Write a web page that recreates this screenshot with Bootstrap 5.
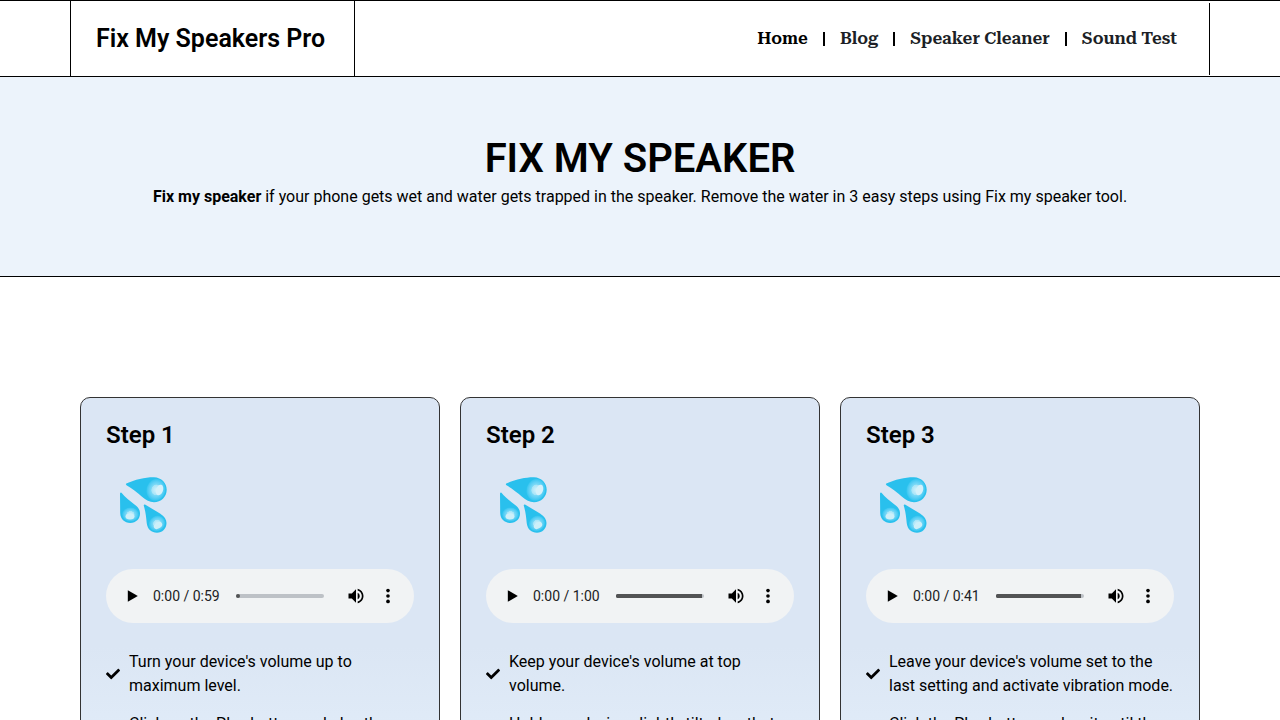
<!DOCTYPE html>
<html lang="en">
<head>
<meta charset="utf-8">
<meta name="viewport" content="width=device-width, initial-scale=1">
<title>Fix My Speaker</title>
<link href="https://cdn.jsdelivr.net/npm/bootstrap@5.3.0/dist/css/bootstrap.min.css" rel="stylesheet">
<style>
  html { scrollbar-width: none; }
  body { font-family: Roboto, sans-serif; font-size: 16px; line-height: 24px; color: #000; background: #fff; }
  .site-header { border-top: 1px solid #000; border-bottom: 1px solid #000; }
  .header-inner { margin: 0 70px; }
  .brand-box { border-left: 1px solid #000; border-right: 1px solid #000; padding: 20px 29px 20px 25px; }
  .brand-link { font-size: 25px; line-height: 35px; font-weight: 600; color: #000; text-decoration: none; }
  .menu-box { border-right: 1px solid #000; margin: 2px 0 1px; padding-right: 17px; }
  .menu-link { font-family: "Roboto Serif", "Noto Serif", "DejaVu Serif Condensed", "DejaVu Serif", serif; font-size: 17px; font-weight: 600; color: #1c1f26; padding: 0 15px 2px; text-decoration: none; }
  .menu-link.active { color: #000; }
  .menu-item + .menu-item::before { content: ""; width: 2px; height: 14px; background: #000; }
  .hero { background: #ecf3fb; border-bottom: 1px solid #000; padding: 60px 16px 67px; }
  .hero h1 { font-size: 40px; line-height: 44px; font-weight: 600; margin: 0 0 4px; }
  .steps { padding: 120px 80px 60px; }
  .steps-grid { display: grid; grid-template-columns: repeat(auto-fit, minmax(300px, 1fr)); gap: 20px; }
  .step-box { border: 1px solid #333; border-radius: 10px; padding: 25px; background: linear-gradient(#dbe6f4 64%, #e3eefa); }
  .step-box h2 { font-size: 24px; line-height: 24px; font-weight: 600; margin: 0 0 23px; }
  .drops { display: block; width: 72px; height: 72px; }
  .player { background: #f1f3f4; border-radius: 27px; height: 54px; margin: 27px 0; padding: 0 16px; }
  .player button { border: 0; background: none; padding: 0; width: 20px; height: 20px; display: flex; }
  .player .mute { margin: 0 12px 0 22px; }
  .player svg { width: 20px; height: 20px; }
  .clock { font-size: 14px; color: #202124; margin: 0 16px 0 11px; white-space: nowrap; }
  .seek { appearance: none; flex: 1; min-width: 0; height: 4px; border-radius: 2px; margin: 0; background: linear-gradient(90deg, #525354 var(--buffered), #bdc1c6 var(--buffered)); }
  .seek::-webkit-slider-thumb { appearance: none; width: 4px; height: 4px; border-radius: 2px; background: #525354; }
  .tips { gap: 14px; }
  .tips svg { width: 14px; height: 14px; flex: none; margin-right: 9px; }
</style>
</head>
<body>
<svg class="position-absolute" width="0" height="0" aria-hidden="true">
  <defs>
    <radialGradient id="shine"><stop offset="0" stop-color="#d2f1fb"/><stop offset=".45" stop-color="#a8e5f8"/><stop offset=".5" stop-color="#7bd9f6"/><stop offset=".75" stop-color="#5ccff5"/><stop offset="1" stop-color="#35c6f0"/></radialGradient>
  </defs>
  <symbol id="drops" viewBox="0 0 72 72">
    <g fill="#29c0ed">
      <path d="M20.300 13.500C29 9.500 40 7 48 7.200C55.500 7.500 60.700 13 60.700 19.700C60.700 26.800 55 32.200 48 32.200C43.500 32.200 40 30 36 26.700C31 22.300 26 18.500 20.500 15.300Q19.300 14.200 20.300 13.500Z"/>
      <path d="M15.500 22.700C19 27 24 31 28.500 34.500C32 37 34 39.700 34 43.500C34 49 30 52.900 24.300 52.900C18.500 52.900 14.300 49 14.200 43C14.100 36 14.100 30 14 23.500Q14.500 22 15.500 22.700Z"/>
      <path d="M39 34.500C44 37.500 49 40.500 54 43.500C58.500 46.500 60.500 49.500 60.500 53C60.500 58.700 56.300 62.700 51 62.700C45.500 62.700 41.500 59.500 40.700 53C40.200 47 39.500 41 37.700 35.500Q38 34 39 34.500Z"/>
    </g>
    <ellipse cx="50" cy="19.800" rx="9.500" ry="11" fill="url(#shine)" transform="rotate(15 50 19.800)"/>
    <ellipse cx="24.500" cy="44.500" rx="8.300" ry="7" fill="url(#shine)"/>
    <ellipse cx="51" cy="53.500" rx="8.300" ry="7.500" fill="url(#shine)" transform="rotate(-30 51 53.500)"/>
    <ellipse cx="53.500" cy="20" rx="3.500" ry="5.500" fill="#d5f1fa" transform="rotate(20 53.500 20)"/>
    <ellipse cx="24" cy="46.500" rx="4.500" ry="3" fill="#cdeff9"/>
    <ellipse cx="52" cy="55.500" rx="4.500" ry="3" fill="#cdeff9" transform="rotate(-30 52 55.500)"/>
  </symbol>
  <symbol id="play" viewBox="0 0 24 24"><path d="M7 5v14l12-7z"/></symbol>
  <symbol id="volume" viewBox="0 0 24 24"><path d="M3 9v6h4l5 5V4L7 9H3zm13.500 3A4.500 4.500 0 0 0 14 7.970v8.050c1.480-.73 2.500-2.250 2.500-4.020zM14 3.230v2.060c2.890.86 5 3.540 5 6.710s-2.110 5.850-5 6.710v2.060c4.010-.91 7-4.490 7-8.770s-2.990-7.860-7-8.770z"/></symbol>
  <symbol id="more" viewBox="0 0 24 24"><circle cx="12" cy="5.500" r="2.200"/><circle cx="12" cy="12" r="2.200"/><circle cx="12" cy="18.500" r="2.200"/></symbol>
  <symbol id="check" viewBox="0 0 512 512"><path d="M173.898 439.404l-166.400-166.400c-9.997-9.997-9.997-26.206 0-36.204l36.203-36.204c9.997-9.998 26.207-9.998 36.204 0L192 312.690 432.095 72.596c9.997-9.997 26.207-9.997 36.204 0l36.203 36.204c9.997 9.997 9.997 26.206 0 36.204l-294.400 294.401c-9.998 9.997-26.207 9.997-36.204-.001z"/></symbol>
</svg>

<header class="site-header">
  <div class="header-inner d-flex justify-content-between">
    <div class="brand-box"><a class="brand-link" href="#">Fix My Speakers Pro</a></div>
    <nav class="menu-box d-flex align-items-center" aria-label="Main">
      <ul class="list-unstyled d-flex mb-0">
        <li class="menu-item d-flex align-items-center"><a class="menu-link active" href="#" aria-current="page">Home</a></li>
        <li class="menu-item d-flex align-items-center"><a class="menu-link" href="#">Blog</a></li>
        <li class="menu-item d-flex align-items-center"><a class="menu-link" href="#">Speaker Cleaner</a></li>
        <li class="menu-item d-flex align-items-center"><a class="menu-link" href="#">Sound Test</a></li>
      </ul>
    </nav>
  </div>
</header>

<main>
  <section class="hero text-center">
    <h1>FIX MY SPEAKER</h1>
    <p class="mb-0"><b>Fix my speaker</b> if your phone gets wet and water gets trapped in the speaker. Remove the water in 3 easy steps using Fix my speaker tool.</p>
  </section>

  <section class="steps">
    <div class="steps-grid">
      <article class="step-box">
        <h2>Step 1</h2>
        <svg class="drops" role="img" aria-label="Water drops"><use href="#drops"/></svg>
        <div class="player d-flex align-items-center">
          <button type="button" aria-label="Play"><svg><use href="#play"/></svg></button>
          <span class="clock">0:00 / 0:59</span>
          <input class="seek" type="range" min="0" max="59" value="0" aria-label="Seek" style="--buffered:0%">
          <button class="mute" type="button" aria-label="Mute"><svg><use href="#volume"/></svg></button>
          <button type="button" aria-label="More options"><svg><use href="#more"/></svg></button>
        </div>
        <ul class="tips list-unstyled d-flex flex-column mb-0">
          <li class="d-flex align-items-center"><svg aria-hidden="true"><use href="#check"/></svg><span>Turn your device's volume up to maximum level.</span></li>
          <li class="d-flex align-items-center"><svg aria-hidden="true"><use href="#check"/></svg><span>Click on the Play button and play the sound.</span></li>
        </ul>
      </article>

      <article class="step-box">
        <h2>Step 2</h2>
        <svg class="drops" role="img" aria-label="Water drops"><use href="#drops"/></svg>
        <div class="player d-flex align-items-center">
          <button type="button" aria-label="Play"><svg><use href="#play"/></svg></button>
          <span class="clock">0:00 / 1:00</span>
          <input class="seek" type="range" min="0" max="60" value="0" aria-label="Seek" style="--buffered:98%">
          <button class="mute" type="button" aria-label="Mute"><svg><use href="#volume"/></svg></button>
          <button type="button" aria-label="More options"><svg><use href="#more"/></svg></button>
        </div>
        <ul class="tips list-unstyled d-flex flex-column mb-0">
          <li class="d-flex align-items-center"><svg aria-hidden="true"><use href="#check"/></svg><span>Keep your device's volume at top volume.</span></li>
          <li class="d-flex align-items-center"><svg aria-hidden="true"><use href="#check"/></svg><span>Hold your device slightly tilted so that the water runs out.</span></li>
        </ul>
      </article>

      <article class="step-box">
        <h2>Step 3</h2>
        <svg class="drops" role="img" aria-label="Water drops"><use href="#drops"/></svg>
        <div class="player d-flex align-items-center">
          <button type="button" aria-label="Play"><svg><use href="#play"/></svg></button>
          <span class="clock">0:00 / 0:41</span>
          <input class="seek" type="range" min="0" max="41" value="0" aria-label="Seek" style="--buffered:97%">
          <button class="mute" type="button" aria-label="Mute"><svg><use href="#volume"/></svg></button>
          <button type="button" aria-label="More options"><svg><use href="#more"/></svg></button>
        </div>
        <ul class="tips list-unstyled d-flex flex-column mb-0">
          <li class="d-flex align-items-center"><svg aria-hidden="true"><use href="#check"/></svg><span>Leave your device's volume set to the last setting and activate vibration mode.</span></li>
          <li class="d-flex align-items-center"><svg aria-hidden="true"><use href="#check"/></svg><span>Click the Play button and wait until the sound ends.</span></li>
        </ul>
      </article>
    </div>
  </section>
</main>
<script src="https://cdn.jsdelivr.net/npm/bootstrap@5.3.0/dist/js/bootstrap.bundle.min.js"></script>
</body>
</html>
